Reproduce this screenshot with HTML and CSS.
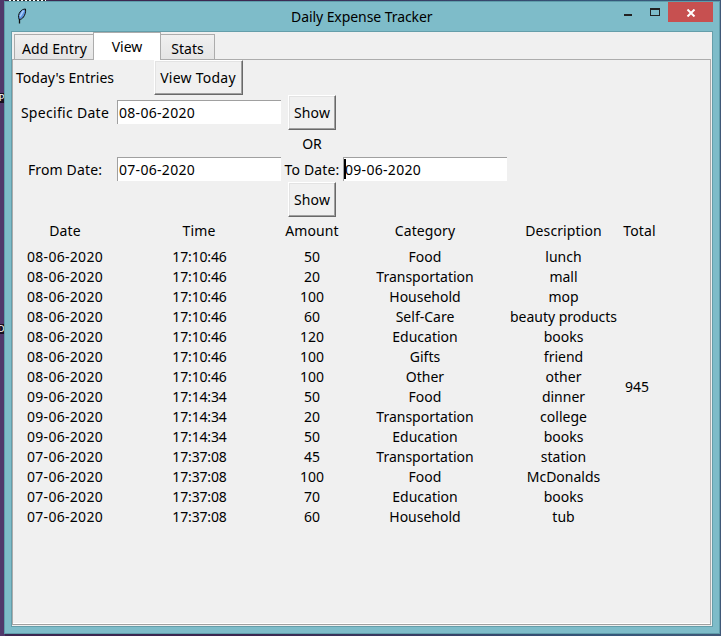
FILE: index.html
```html
<!DOCTYPE html>
<html lang="en">
<head>
<meta charset="utf-8">
<title>Daily Expense Tracker</title>
<link rel="stylesheet" href="styles.css">
</head>
<body>
<span class="desk desk-top"></span>
<span class="desk desk-p">P</span>
<span class="desk desk-d">D</span>
<main class="window">
  <header class="titlebar">
    <svg class="feather" width="10" height="16" viewBox="0 0 10 16"><path d="M2.2 11.5C1 9 1.5 6 3 4C4.5 2 6 1.2 8.5 1C9 4 8 7 6.5 9C5.5 10.5 4 11.5 2.2 11.5Z" fill="#5b92dc" stroke="#111" stroke-width="1"/><path d="M6.5 2.5L3 8.5" stroke="#a9ccfa" stroke-width="1.6"/><path d="M2.5 15.5V11" fill="none" stroke="#111" stroke-width="1.3"/></svg>
    <h1>Daily Expense Tracker</h1>
    <svg class="controls" width="45" height="20" viewBox="0 0 45 20" shape-rendering="crispEdges"><path fill="#222" d="M1 12h8v2H1z"/><path fill-rule="evenodd" d="M27 6h10v8H27zM28 8v5h8V8z" fill="#222"/></svg>
    <div class="close"><svg width="10" height="8" viewBox="0 0 10 8"><path d="M1.5.5L8.5 7.5M8.5.5L1.5 7.5" stroke="#fff" stroke-width="2"/></svg></div>
  </header>
  <section class="client">
    <nav class="tabs">
      <div class="tab add">Add Entry</div>
      <div class="tab active">View</div>
      <div class="tab stats">Stats</div>
    </nav>
    <div class="pane">
      <div class="grid form">
        <span class="today">Today's Entries</span><button class="wide">View Today</button><i></i><i></i>
        <span class="specific">Specific Date</span><div class="entry">08-06-2020</div><button>Show</button><i></i>
        <i></i><i></i><span class="or">OR</span><i></i>
        <span class="from">From Date:</span><div class="entry">07-06-2020</div><span class="to">To Date:</span><div class="entry focus">09-06-2020</div>
        <i></i><i></i><button>Show</button><i></i>
      </div>
      <div class="grid head"><span>Date</span><span>Time</span><span>Amount</span><span>Category</span><span>Description</span><span>Total</span></div>
      <div class="grid data">
        <b class="total">945</b>
        <span class="date">08-06-2020</span><span class="time">17:10:46</span><span>50</span><span>Food</span><span>lunch</span>
        <span class="date">08-06-2020</span><span class="time">17:10:46</span><span>20</span><span>Transportation</span><span>mall</span>
        <span class="date">08-06-2020</span><span class="time">17:10:46</span><span>100</span><span>Household</span><span>mop</span>
        <span class="date">08-06-2020</span><span class="time">17:10:46</span><span>60</span><span>Self-Care</span><span>beauty products</span>
        <span class="date">08-06-2020</span><span class="time">17:10:46</span><span>120</span><span>Education</span><span>books</span>
        <span class="date">08-06-2020</span><span class="time">17:10:46</span><span>100</span><span>Gifts</span><span>friend</span>
        <span class="date">08-06-2020</span><span class="time">17:10:46</span><span>100</span><span>Other</span><span>other</span>
        <span class="date">09-06-2020</span><span class="time">17:14:34</span><span>50</span><span>Food</span><span>dinner</span>
        <span class="date">09-06-2020</span><span class="time">17:14:34</span><span>20</span><span>Transportation</span><span>college</span>
        <span class="date">09-06-2020</span><span class="time">17:14:34</span><span>50</span><span>Education</span><span>books</span>
        <span class="date">07-06-2020</span><span class="time">17:37:08</span><span>45</span><span>Transportation</span><span>station</span>
        <span class="date">07-06-2020</span><span class="time">17:37:08</span><span>100</span><span>Food</span><span>McDonalds</span>
        <span class="date">07-06-2020</span><span class="time">17:37:08</span><span>70</span><span>Education</span><span>books</span>
        <span class="date">07-06-2020</span><span class="time">17:37:08</span><span>60</span><span>Household</span><span>tub</span>
      </div>
    </div>
  </section>
</main>
</body>
</html>
```
FILE: styles.css
```css
* { box-sizing: border-box; }
body { margin: 0; width: 721px; height: 636px; padding: 1px 1px 2px 4px; overflow: hidden; position: relative; font: 14px/20px "Noto Sans", sans-serif; color: #000;
  background: linear-gradient(90deg, #50386b 0 5px, #3c2750 5px 250px, #34577a 600px, #405878); }
.desk { position: absolute; color: #fff; font-size: 9px; line-height: 10px; width: 4px; overflow: hidden; }
.desk-top { left: 9px; top: 0; width: 37px; height: 1px; background: repeating-linear-gradient(90deg, #fff 0 2px, #222 2px 4px); }
.desk-p { left: -1px; top: 93px; width: 5px; background: #181020; }
.desk-d { left: -2px; top: 324px; width: 6px; background: #181020; }
.window { width: 716px; height: 633px; background: #7ebcc9; border: 1px solid #5f9dab; padding: 0 6px 6px; position: relative; }
.titlebar { height: 29px; display: flex; align-items: flex-start; }
.feather { margin: 6px 0 0 6px; flex: none; }
h1 { margin: 5px 0 0 264px; font-size: 14px; line-height: 20px; font-weight: 400; width: 142px; letter-spacing: -.07px; white-space: nowrap; }
.controls { margin-left: 190px; flex: none; }
.close { width: 45px; height: 20px; margin-left: auto; background: #c75050; display: flex; align-items: center; justify-content: center; padding-top: 1px; }
.client { height: 596px; border: 1px solid #659eaa; background: #f0f0f0; display: flex; flex-direction: column; padding: 0 1px 1px 0; }
.tabs { display: flex; align-items: flex-end; height: 27px; padding-left: 2px; flex: none; }
.tab { height: 25px; border: 1px solid #acacac; border-bottom: 0; background: linear-gradient(#f0f0f0, #e5e5e5); text-align: center; line-height: 28px; white-space: nowrap; }
.tab.add { width: 79px; border-right: 0; letter-spacing: .1px; padding-left: 1px; }
.tab.active { width: 68px; height: 28px; margin-bottom: -1px; background: #fff; line-height: 28px; z-index: 1; }
.tab.stats { width: 54px; border-left: 0; }
.pane { flex: 1; border: 1px solid #acacac; border-bottom-color: #a0a0a0; box-shadow: inset 0 -1px #fff; }
.grid { display: grid; grid-template-columns: 104px 164px 62px 164px 113px 39px; justify-items: center; align-items: center; white-space: nowrap; }
.form { grid-template-columns: 104px 164px 62px 164px; grid-template-rows: 35px 35px 27px 25px 35px; }
.specific { letter-spacing: .3px; }
.from, .to { letter-spacing: .15px; }
.head { height: 27px; margin-bottom: 3px; letter-spacing: .1px; }
.data { grid-template-rows: repeat(14, 20px); }
.total { grid-column: 6; grid-row: 1 / span 14; font-weight: 400; margin-right: 5px; }
button { width: 48px; height: 35px; padding: 0 0 0 1px; margin-right: 1px; font: inherit; letter-spacing: .15px; color: #000; background: #f0f0f0; border: 1px solid; border-color: #fff #696969 #696969 #fff; box-shadow: inset -1px -1px #a0a0a0, inset 1px 1px #e3e3e3; }
button.wide { width: 89px; padding: 0; margin-right: 2px; letter-spacing: .25px; }
.entry { width: 164px; height: 24px; margin-bottom: 1px; background: #fff; border-top: 1px solid #a0a0a0; border-left: 1px solid #a0a0a0; padding-left: 1px; line-height: 23px; letter-spacing: .3px; }
.entry.focus { background: linear-gradient(#000, #000) 0 1px / 2px 20px no-repeat #fff; }
.date { letter-spacing: .3px; }
.time { letter-spacing: -.15px; padding-left: 1px; }
```
